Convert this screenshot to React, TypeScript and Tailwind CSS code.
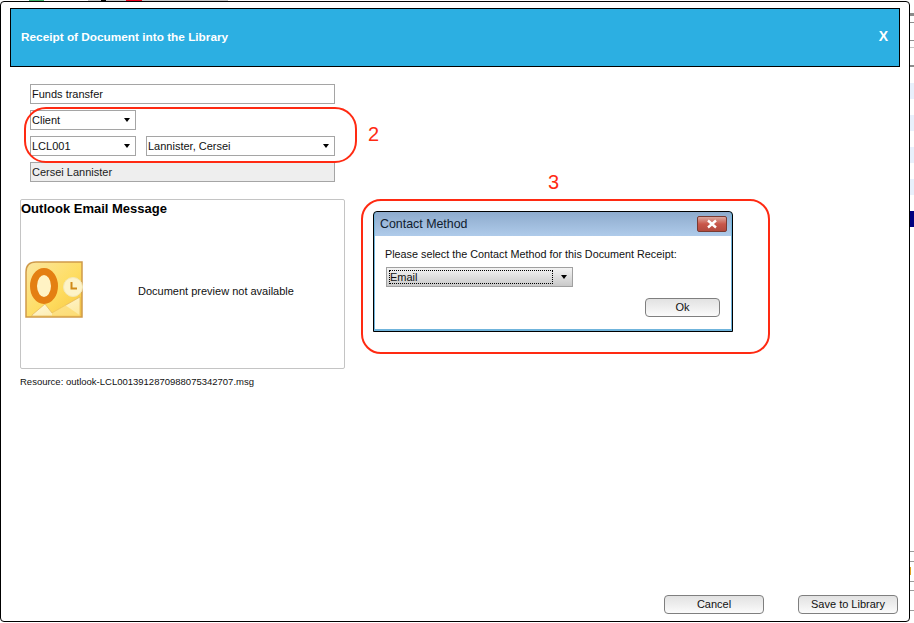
const FONT = "font-['Liberation_Sans',sans-serif]"

const TOP_BITS = [
  { w: 29, c: 'bg-white' },
  { w: 15, c: 'bg-[#3fb56a]' },
  { w: 44, c: 'bg-white' },
  { w: 13, c: 'bg-[#c8c8c8]' },
  { w: 5, c: 'bg-black' },
  { w: 20, c: 'bg-[#c8c8c8]' },
  { w: 16, c: 'bg-[#e8001c]' },
  { w: 45, c: 'bg-[#c8c8c8]' },
  { w: 41, c: 'bg-[#c8c8c8]' },
]

function Arrow() {
  return <span className="block h-0 w-0 border-x-[3.5px] border-t-[4px] border-x-transparent border-t-black" />
}

function SelectBox({ value, className }: { value: string; className: string }) {
  return (
    <div className={`flex h-[20px] items-center justify-between border border-[#a5a5a5] bg-white pl-[1px] pr-[5px] text-[11px] text-[#111] ${className}`}>
      <span className="pt-[1px]">{value}</span>
      <Arrow />
    </div>
  )
}

function GlossButton({ label, className }: { label: string; className: string }) {
  return (
    <button
      type="button"
      className={`flex h-[19px] items-center justify-center rounded-[4px] border border-[#7f7f7f] bg-gradient-to-b from-[#e2e2e2] via-[#eeeeee] to-[#fbfbfb] text-[11px] text-[#111] ${className}`}
    >
      {label}
    </button>
  )
}

function OutlookIcon() {
  return (
    <svg width="60" height="58" viewBox="0 0 60 58" className="shrink-0">
      <defs>
        <linearGradient id="bg" x1="0" y1="0" x2="1" y2="1">
          <stop offset="0" stopColor="#fbe6a0" />
          <stop offset="0.55" stopColor="#fedd62" />
          <stop offset="1" stopColor="#f8c63e" />
        </linearGradient>
        <linearGradient id="env" x1="0" y1="0" x2="1" y2="1">
          <stop offset="0" stopColor="#fffbe8" />
          <stop offset="1" stopColor="#fde89a" />
        </linearGradient>
      </defs>
      <path d="M11 1H57V56H1V11Q1 1 11 1Z" fill="url(#bg)" stroke="#cf9a4a" strokeWidth="1.5" />
      <path d="M7 54 L20 43 L27 52 L55 36 V55 H7Z" fill="url(#env)" stroke="#e2b45a" strokeWidth="0.7" />
      <path d="M27 52 L40 44 L56 55 H27Z" fill="#fbd65e" opacity="0.6" />
      <ellipse cx="19" cy="25" rx="10.5" ry="14.5" fill="#fff3c4" stroke="#e47f12" strokeWidth="7" />
      <circle cx="48" cy="26" r="9.5" fill="#fdf3c8" stroke="#f2e7b6" />
      <path d="M46.5 21V27.5H52" fill="none" stroke="#d08a18" strokeWidth="2" />
    </svg>
  )
}

export default function App() {
  return (
    <div className={`relative h-[623px] w-[914px] overflow-hidden bg-white ${FONT}`}>
      {/* page behind the modal, only the edges show */}
      <div className="absolute left-0 top-0 flex h-[1px] w-[520px]">
        {TOP_BITS.map((b, i) => (
          <div key={i} className={b.c} style={{ width: b.w }} />
        ))}
      </div>
      <div className="absolute right-0 top-0 flex h-full w-[4px] flex-col">
        <div className="mt-[13px] h-[3px] shrink-0 bg-[#8c8c8c]" />
        <div className="mt-[6px] h-[1px] shrink-0 bg-[#8c8c8c]" />
        <div className="mt-[17px] h-[1px] shrink-0 bg-[#8c8c8c]" />
        <div className="mt-[6px] h-[1px] shrink-0 bg-[#c4c4c4]" />
        <div className="mt-[17px] h-[2px] shrink-0 bg-[#8c8c8c]" />
        <div className="mt-[16px] h-[16px] shrink-0 bg-[#e8f0fc]" />
        <div className="h-[16px] shrink-0" />
        <div className="h-[16px] shrink-0 bg-[#e8f0fc]" />
        <div className="h-[16px] shrink-0" />
        <div className="h-[16px] shrink-0 bg-[#e8f0fc]" />
        <div className="h-[16px] shrink-0" />
        <div className="h-[16px] shrink-0 bg-[#e8f0fc]" />
        <div className="h-[16px] shrink-0" />
        <div className="h-[16px] shrink-0 bg-[#000080]" />
        <div className="mt-[324px] h-[1px] shrink-0 bg-[#9a9a9a]" />
        <div className="mt-[9px] h-[1px] shrink-0 bg-[#9a9a9a]" />
        <div className="mt-[5px] h-[8px] w-[1px] shrink-0 bg-[#e0a020]" />
        <div className="mt-[6px] h-[1px] shrink-0 bg-[#9a9a9a]" />
        <div className="mt-[8px] h-[1px] shrink-0 bg-[#9a9a9a]" />
        <div className="mt-[19px] h-[1px] shrink-0 bg-[#9a9a9a]" />
      </div>

      <div className="absolute left-0 top-[1px] flex h-[621px] w-[910px] flex-col rounded-[4px] border border-black bg-white px-[9px] pt-[6px]">
        <div className="flex h-[59px] shrink-0 items-center justify-between border border-black bg-[#2cafe2] pl-[10px] pr-[10px] text-white">
          <span className="text-[11.8px] font-bold">Receipt of Document into the Library</span>
          <span className="mb-[2px] mr-[1px] text-[14px] font-bold">X</span>
        </div>

        <div className="ml-[20px] mt-[17px] flex w-[305px] flex-col gap-[6px]">
          <div className="flex h-[20px] items-center border border-[#a5a5a5] pl-[1px] pt-[1px] text-[11px] text-[#111]">Funds transfer</div>
          <SelectBox value="Client" className="w-[106px]" />
          <div className="flex gap-[10px]">
            <SelectBox value="LCL001" className="w-[106px]" />
            <SelectBox value="Lannister, Cersei" className="w-[189px]" />
          </div>
          <div className="flex h-[20px] items-center border border-[#a5a5a5] bg-[#eeeeee] pl-[1px] pt-[1px] text-[11px] text-[#222]">Cersei Lannister</div>
        </div>

        <div className="ml-[10px] mt-[17px] flex h-[170px] w-[325px] flex-col rounded-[2px] border border-[#c4c4c4]">
          <div className="pt-[1px] text-[13px] font-bold leading-[16px] text-black">Outlook Email Message</div>
          <div className="ml-[4px] mt-[44px] flex items-center">
            <OutlookIcon />
            <div className="ml-[53px] pt-[3px] text-[11px] text-[#111]">Document preview not available</div>
          </div>
        </div>

        <div className="ml-[10px] mt-[6px] text-[9.5px] leading-[13px] text-[#111]">Resource: outlook-LCL0013912870988075342707.msg</div>

        <div className="mt-auto flex justify-end gap-[34px] pb-[7px] pr-[2px]">
          <GlossButton label="Cancel" className="w-[100px]" />
          <GlossButton label="Save to Library" className="w-[100px]" />
        </div>
      </div>

      {/* Contact Method window sits over the modal */}
      <div className="absolute left-[373px] top-[211px] flex h-[121px] w-[360px] flex-col rounded-t-[4px] border border-black bg-[#6fb4dc] px-[1px] pb-[2px]">
        <div className="flex h-[24px] shrink-0 items-center justify-between rounded-t-[3px] bg-gradient-to-b from-[#8eabcd] to-[#afcbea] pl-[5px] pr-[4px] pt-[1px] text-[12.4px] text-[#10202f]">
          <span>Contact Method</span>
          <span className="mb-[1px] flex h-[16px] w-[30px] items-center justify-center rounded-[2px] border border-[#7a3a32] bg-gradient-to-b from-[#dba79f] via-[#c9574a] to-[#b24a3e]">
            <svg width="12" height="10" viewBox="0 0 12 10">
              <path d="M2 1.5 L10 8.5 M10 1.5 L2 8.5" stroke="#fff" strokeWidth="2.4" />
            </svg>
          </span>
        </div>
        <div className="flex flex-1 flex-col bg-white px-[11px] pt-[11px]">
          <div className="-ml-[1px] text-[10.8px] leading-[15px] text-[#111]">Please select the Contact Method for this Document Receipt:</div>
          <div className="mt-[5px] flex h-[20px] w-[187px] items-center border border-[#a0a0a0] bg-gradient-to-b from-[#f4f4f4] to-[#c9c9c9] pl-[2px] pr-[5px] text-[11px] text-[#111]">
            <span className="flex h-[14px] flex-1 items-center border border-dotted border-black">Email</span>
            <span className="ml-[8px]"><Arrow /></span>
          </div>
          <div className="mt-[11px] flex justify-end">
            <GlossButton label="Ok" className="w-[75px]" />
          </div>
        </div>
      </div>

      {/* red annotations */}
      <div className="pointer-events-none absolute left-[24px] top-[107px] h-[56px] w-[333px] rounded-[22px] border-2 border-[#ff2a12]" />
      <div className="absolute left-[368px] top-[120px] text-[20px] leading-[28px] text-[#ff2a12]">2</div>
      <div className="pointer-events-none absolute left-[361px] top-[199px] h-[155px] w-[409px] rounded-[20px] border-2 border-[#ff2a12]" />
      <div className="absolute left-[548px] top-[168px] text-[20px] leading-[28px] text-[#ff2a12]">3</div>
    </div>
  )
}
